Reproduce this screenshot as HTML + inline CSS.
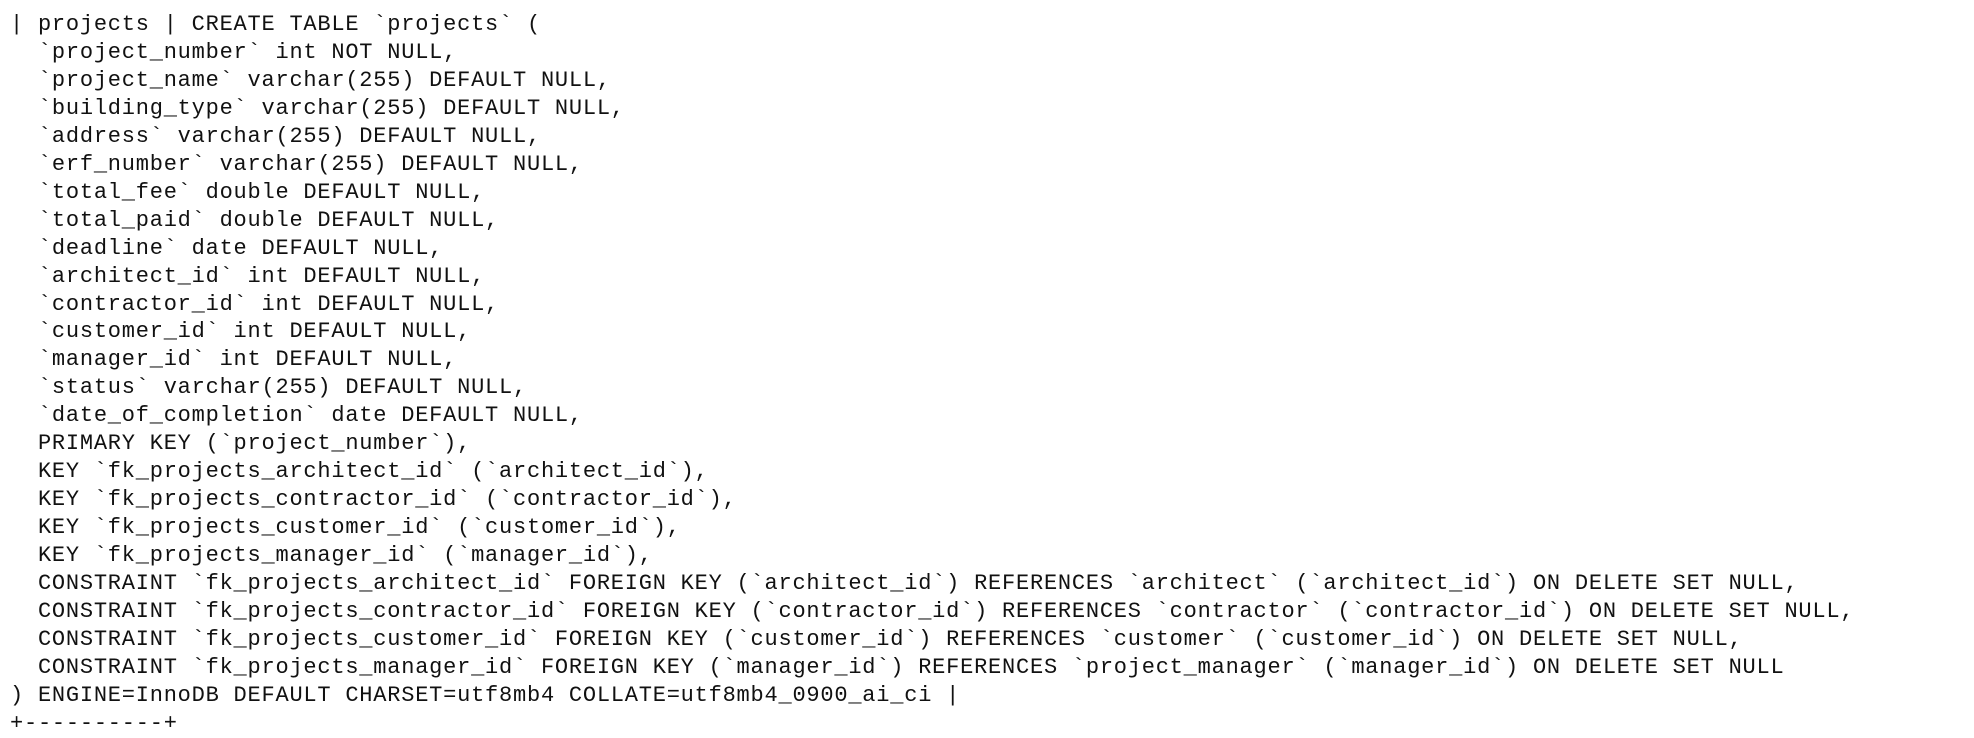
<!DOCTYPE html>
<html><head><meta charset="utf-8"><style>
html,body{margin:0;padding:0;background:#fff;width:1974px;height:718px;overflow:hidden}
pre{margin:0;position:absolute;left:10px;top:11px;font-family:"Liberation Mono","DejaVu Sans Mono",monospace;font-size:22px;letter-spacing:0.77px;line-height:27.95px;color:#111}
</style></head><body>
<pre>| projects | CREATE TABLE `projects` (
  `project_number` int NOT NULL,
  `project_name` varchar(255) DEFAULT NULL,
  `building_type` varchar(255) DEFAULT NULL,
  `address` varchar(255) DEFAULT NULL,
  `erf_number` varchar(255) DEFAULT NULL,
  `total_fee` double DEFAULT NULL,
  `total_paid` double DEFAULT NULL,
  `deadline` date DEFAULT NULL,
  `architect_id` int DEFAULT NULL,
  `contractor_id` int DEFAULT NULL,
  `customer_id` int DEFAULT NULL,
  `manager_id` int DEFAULT NULL,
  `status` varchar(255) DEFAULT NULL,
  `date_of_completion` date DEFAULT NULL,
  PRIMARY KEY (`project_number`),
  KEY `fk_projects_architect_id` (`architect_id`),
  KEY `fk_projects_contractor_id` (`contractor_id`),
  KEY `fk_projects_customer_id` (`customer_id`),
  KEY `fk_projects_manager_id` (`manager_id`),
  CONSTRAINT `fk_projects_architect_id` FOREIGN KEY (`architect_id`) REFERENCES `architect` (`architect_id`) ON DELETE SET NULL,
  CONSTRAINT `fk_projects_contractor_id` FOREIGN KEY (`contractor_id`) REFERENCES `contractor` (`contractor_id`) ON DELETE SET NULL,
  CONSTRAINT `fk_projects_customer_id` FOREIGN KEY (`customer_id`) REFERENCES `customer` (`customer_id`) ON DELETE SET NULL,
  CONSTRAINT `fk_projects_manager_id` FOREIGN KEY (`manager_id`) REFERENCES `project_manager` (`manager_id`) ON DELETE SET NULL
) ENGINE=InnoDB DEFAULT CHARSET=utf8mb4 COLLATE=utf8mb4_0900_ai_ci |
+----------+</pre>
</body></html>
